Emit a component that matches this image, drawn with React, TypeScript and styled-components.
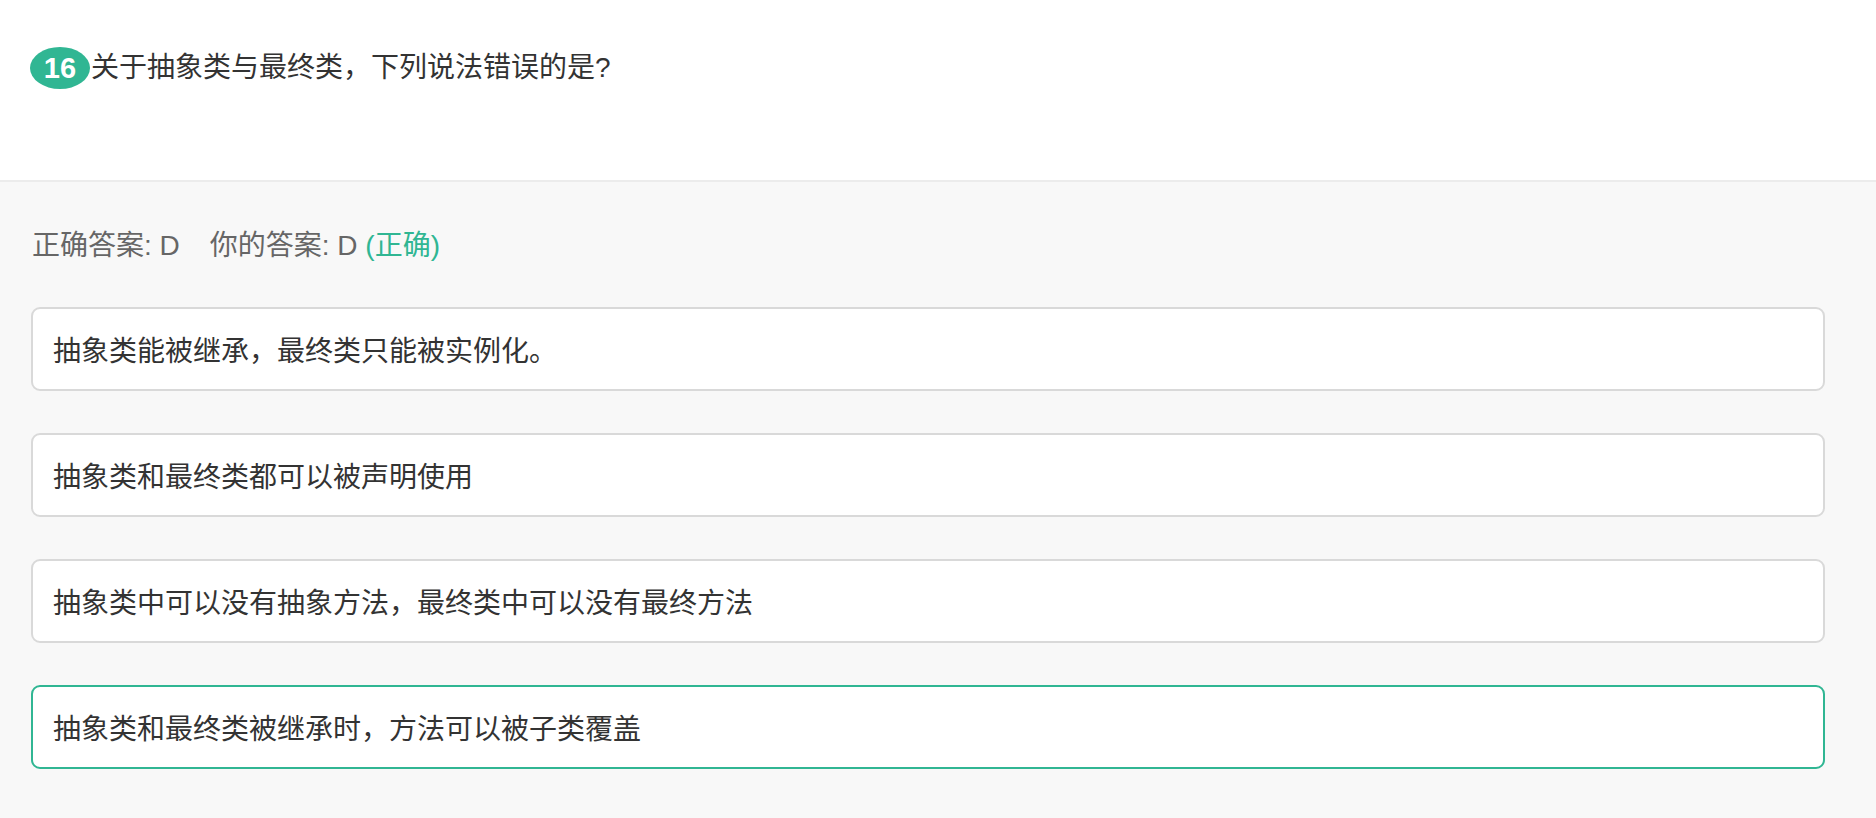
import React from "react";
import styled, { createGlobalStyle } from "styled-components";

const GlobalStyle = createGlobalStyle`
  html, body {
    margin: 0;
    padding: 0;
    background: #f8f8f8;
  }
  body {
    font-family: "Liberation Sans", "Noto Sans CJK SC", sans-serif;
  }
  * { box-sizing: border-box; }
`;

const GREEN = "#30b693";

const Page = styled.div`
  width: 1876px;
  min-height: 818px;
  background: #f8f8f8;
`;

const Header = styled.header`
  height: 182px;
  background: #ffffff;
  border-bottom: 2px solid #ececec;
  padding: 47px 51px 0 30px;
`;

const TitleRow = styled.div`
  display: flex;
  align-items: center;
`;

const Badge = styled.span`
  display: inline-flex;
  align-items: center;
  justify-content: center;
  width: 60px;
  height: 42px;
  border-radius: 50%;
  background: ${GREEN};
  color: #ffffff;
  font-size: 29px;
  font-weight: bold;
  line-height: 42px;
  flex-shrink: 0;
`;

const Title = styled.h1`
  margin: 0 0 0 1px;
  font-size: 28px;
  font-weight: normal;
  line-height: 40px;
  color: #333333;
`;

const Body = styled.section`
  padding: 44px 51px 50px 31px;
`;

const Result = styled.div`
  font-size: 28px;
  line-height: 40px;
  color: #666666;
  margin: 0 0 41px 1px;
`;

const ResultPart = styled.span<{ $gap?: boolean }>`
  margin-right: ${(p) => (p.$gap ? "30px" : "0")};
`;

const Verdict = styled.span`
  color: ${GREEN};
`;

const Options = styled.div`
  display: flex;
  flex-direction: column;
  gap: 42px;
`;

const Option = styled.div<{ $selected?: boolean }>`
  height: 84px;
  display: flex;
  align-items: center;
  padding: 0 20px;
  background: #ffffff;
  border: 2px solid ${(p) => (p.$selected ? GREEN : "#d9d9d9")};
  border-radius: 9px;
  font-size: 28px;
  color: #333333;
`;

const options = [
  { key: "A", text: "抽象类能被继承，最终类只能被实例化。" },
  { key: "B", text: "抽象类和最终类都可以被声明使用" },
  { key: "C", text: "抽象类中可以没有抽象方法，最终类中可以没有最终方法" },
  { key: "D", text: "抽象类和最终类被继承时，方法可以被子类覆盖" },
];

export default function App() {
  const chosen = "D";
  return (
    <Page>
      <GlobalStyle />
      <Header>
        <TitleRow>
          <Badge>16</Badge>
          <Title>关于抽象类与最终类，下列说法错误的是?</Title>
        </TitleRow>
      </Header>
      <Body>
        <Result>
          <ResultPart $gap>正确答案: D</ResultPart>
          <ResultPart>你的答案: D </ResultPart>
          <Verdict>(正确)</Verdict>
        </Result>
        <Options>
          {options.map((o) => (
            <Option key={o.key} $selected={o.key === chosen}>
              {o.text}
            </Option>
          ))}
        </Options>
      </Body>
    </Page>
  );
}
